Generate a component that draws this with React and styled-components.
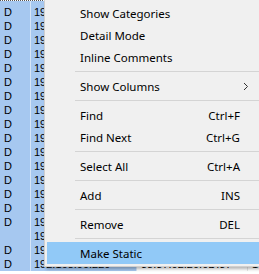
import styled, { createGlobalStyle } from 'styled-components';

const GlobalStyle = createGlobalStyle`
  html, body {
    margin: 0;
    padding: 0;
    background: #fff;
    overflow: hidden;
  }
`;

const Screen = styled.div`
  position: relative;
  width: 259px;
  height: 274px;
  overflow: hidden;
  background: #fff;
`;

const List = styled.div`
  display: flex;
  flex-direction: column;
  border-top: 1px dotted #555;
  font-family: "Liberation Sans", Arial, sans-serif;
  font-size: 11px;
  color: #000;
`;

const Row = styled.div`
  display: grid;
  grid-template-columns: 31px 106px 111px 60px;
  height: ${p => p.$h || 14}px;
  line-height: 14px;
`;

const Cell = styled.div`
  padding-left: ${p => p.$pad || 4}px;
  white-space: nowrap;
  overflow: hidden;
  border-right: 1px solid ${p => (p.$sel ? '#d6e5f7' : '#e6e6e6')};
  background: ${p => (p.$sel ? '#a6c8f0' : '#fff')};
`;

const Menu = styled.div`
  position: absolute;
  left: 44px;
  top: 0;
  width: 218px;
  padding: 2px;
  background: #f0f0f0;
  border: 1px solid #cfcfcf;
  border-top: 0;
  box-shadow: 2px 2px 3px rgba(0, 0, 0, 0.3);
  font-family: "Noto Sans", "Open Sans", sans-serif;
  font-size: 11.5px;
  color: #000;
`;

const Item = styled.div`
  display: flex;
  align-items: center;
  height: 22px;
  padding-left: 33px;
  background: ${p => (p.$active ? '#91c9f7' : 'transparent')};
`;

const Label = styled.span`
  flex: 1;
`;

const Shortcut = styled.span`
  text-align: right;
`;

const Arrow = styled.span`
  width: 25px;
  display: flex;
  align-items: center;
  padding-left: 3px;
  box-sizing: border-box;
`;

const Separator = styled.div`
  height: 7px;
  display: flex;
  align-items: center;
  padding-left: 28px;

  &::after {
    content: '';
    flex: 1;
    height: 1px;
    background: #d4d4d4;
  }
`;

const rows = Array.from({ length: 19 }, (_, i) => ({
  flag: i === 16 ? '' : 'D',
  ip: i === 18 ? '192.168.00.220' : `192.168.00.${201 + i}`,
  mac: i === 18 ? '38:37:02:20:0D:37' : `38:37:02:20:0D:${(10 + i).toString()}`,
}));

const entries = [
  { label: 'Show Categories' },
  { label: 'Detail Mode' },
  { label: 'Inline Comments' },
  { sep: true },
  { label: 'Show Columns', sub: true },
  { sep: true },
  { label: 'Find', key: 'Ctrl+F' },
  { label: 'Find Next', key: 'Ctrl+G' },
  { sep: true },
  { label: 'Select All', key: 'Ctrl+A' },
  { sep: true },
  { label: 'Add', key: 'INS' },
  { sep: true },
  { label: 'Remove', key: 'DEL' },
  { sep: true },
  { label: 'Make Static', active: true },
];

function Chevron() {
  return (
    <svg width="6" height="9" viewBox="0 0 6 9">
      <polyline points="1,1 4.5,4.5 1,8" fill="none" stroke="#333" strokeWidth="1" />
    </svg>
  );
}

export default function App() {
  return (
    <Screen>
      <GlobalStyle />
      <List>
        <Row $h={4}>
          <Cell $sel />
          <Cell $sel />
          <Cell />
          <Cell />
        </Row>
        {rows.map((r, i) => (
          <Row key={i}>
            <Cell $sel>{r.flag}</Cell>
            <Cell $sel $pad={3}>{r.ip}</Cell>
            <Cell>{r.mac}</Cell>
            <Cell>1</Cell>
          </Row>
        ))}
      </List>
      <Menu>
        {entries.map((e, i) =>
          e.sep ? (
            <Separator key={i} />
          ) : (
            <Item key={i} $active={e.active}>
              <Label>{e.label}</Label>
              {e.key && <Shortcut>{e.key}</Shortcut>}
              <Arrow>{e.sub && <Chevron />}</Arrow>
            </Item>
          )
        )}
      </Menu>
    </Screen>
  );
}
